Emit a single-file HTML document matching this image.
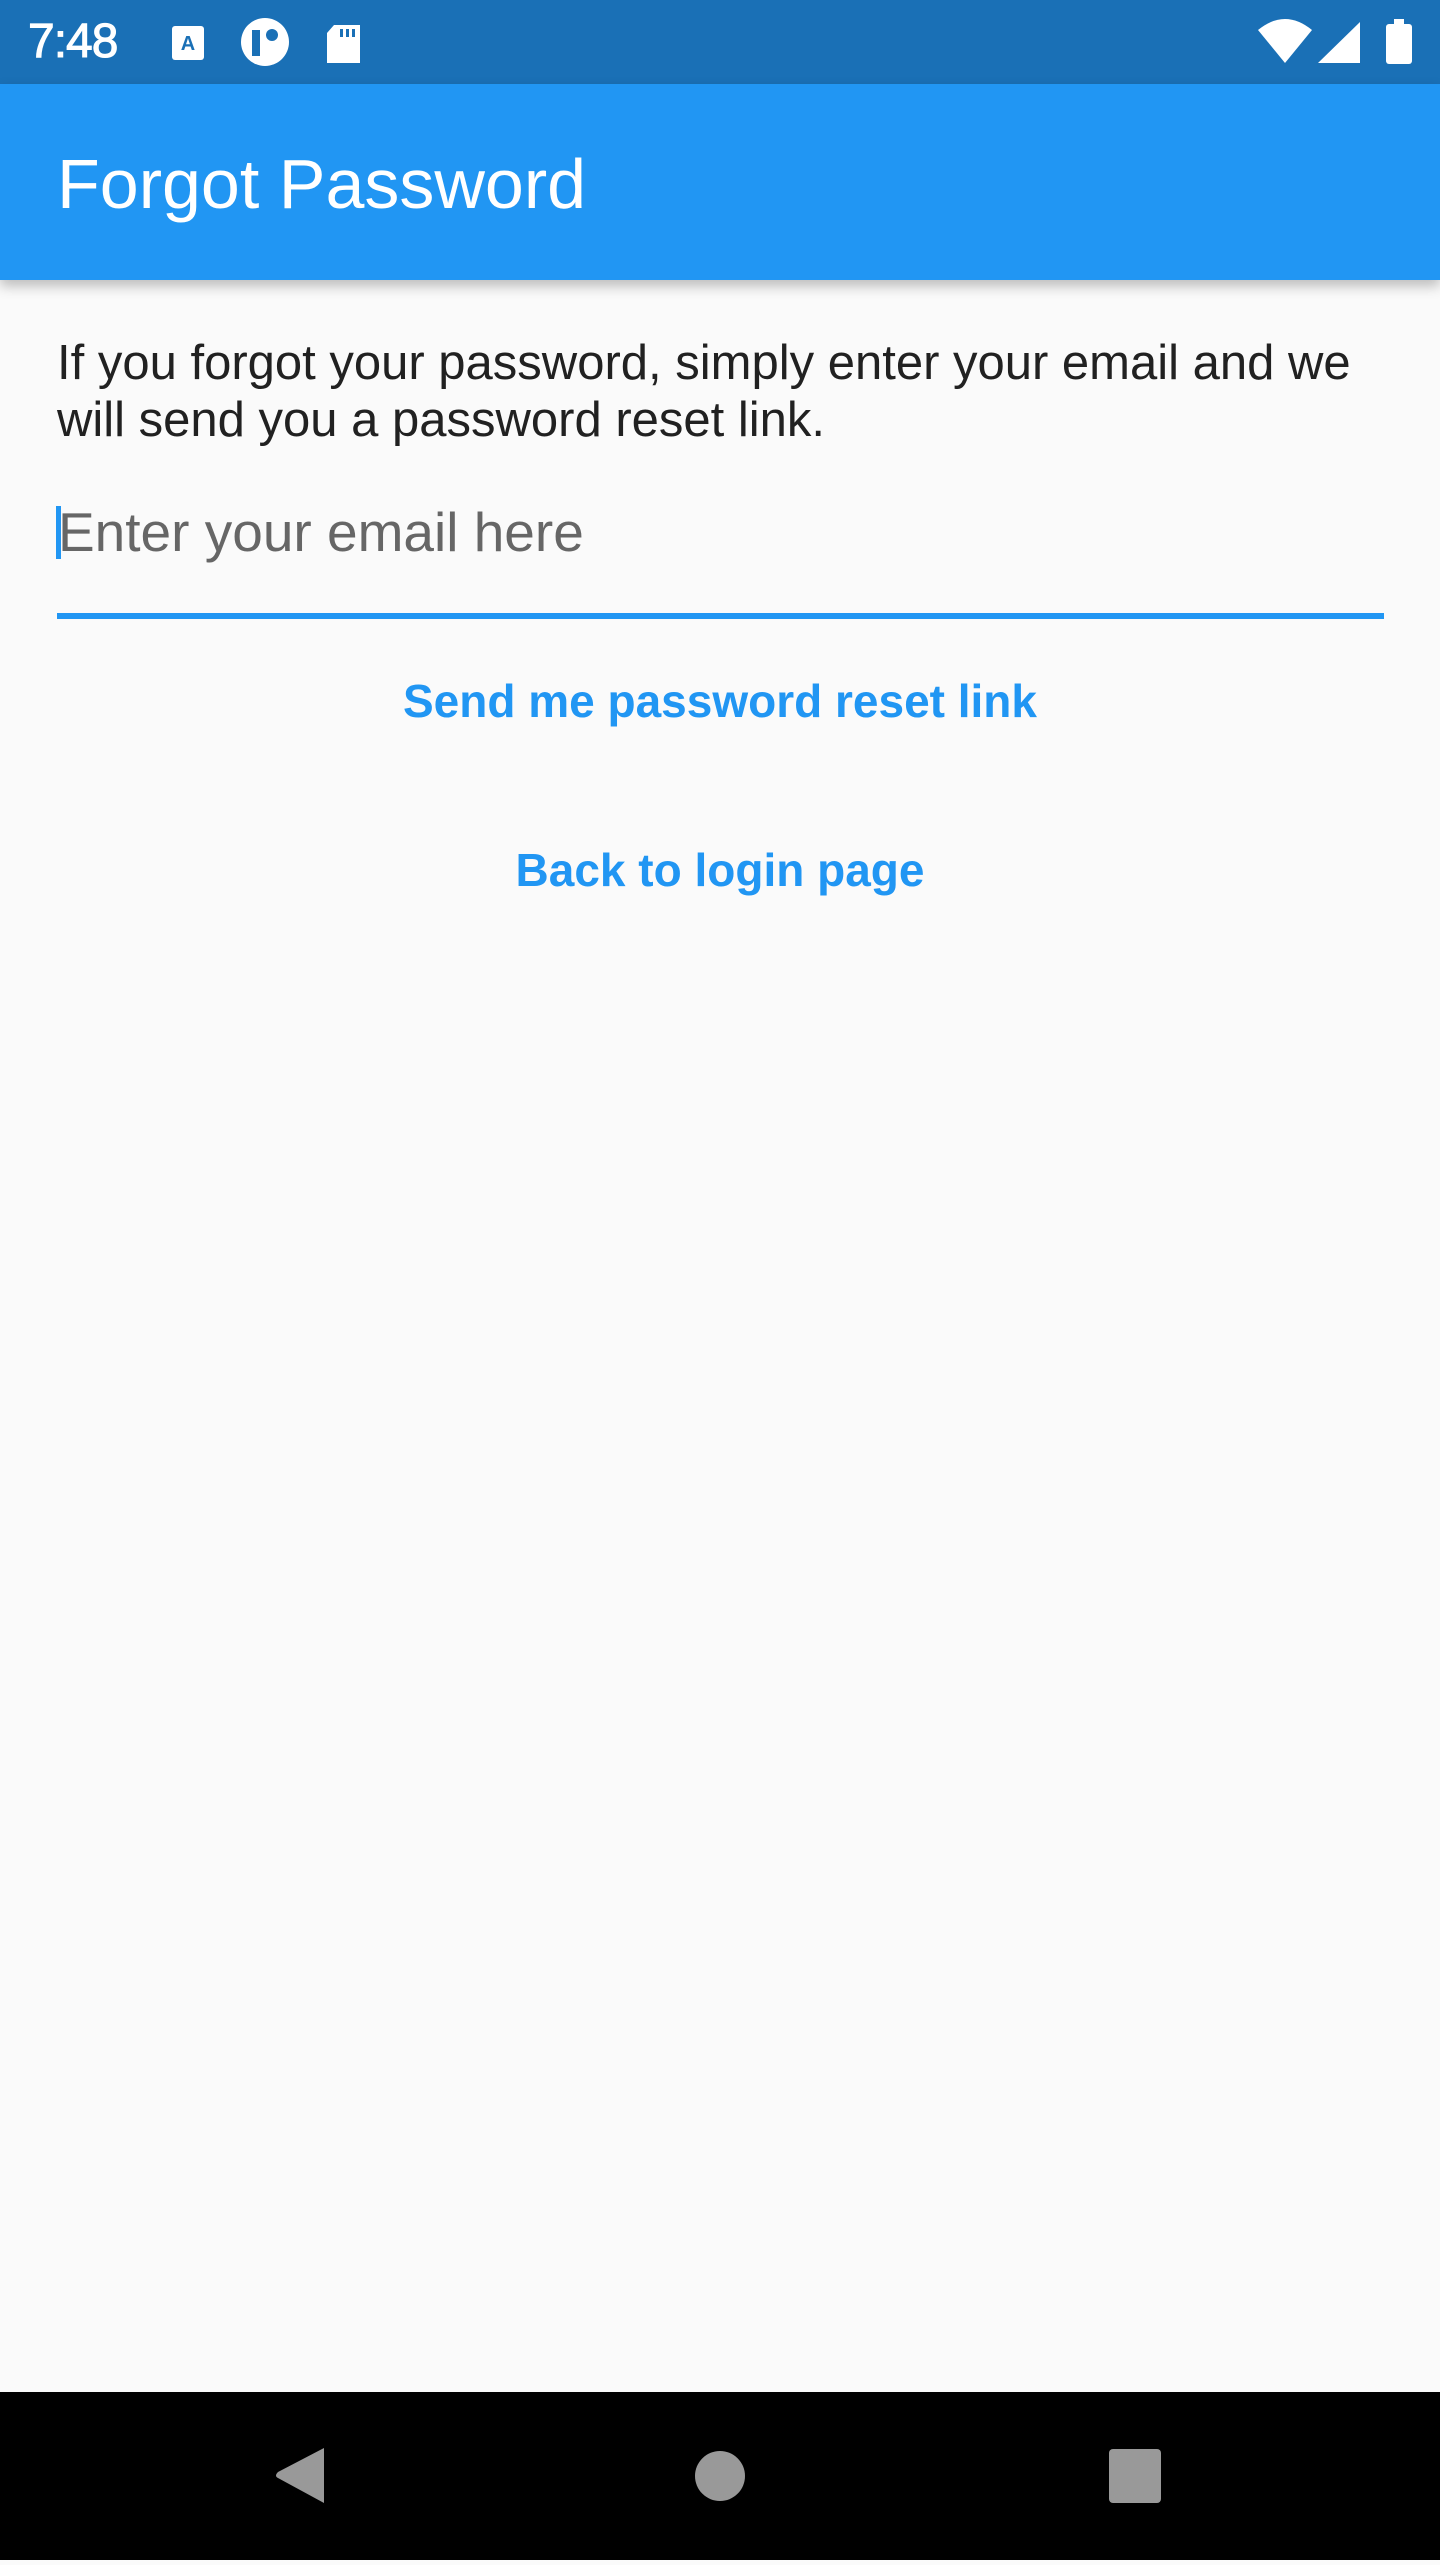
<!DOCTYPE html>
<html><head><meta charset="utf-8"><style>
*{margin:0;padding:0;box-sizing:border-box}
body{width:1440px;height:2560px;background:#fafafa;font-family:"Liberation Sans",sans-serif;position:relative;overflow:hidden}
.sb{position:absolute;left:0;top:0;width:1440px;height:84px;background:#1a70b6}
.ab{position:absolute;left:0;top:84px;width:1440px;height:196px;background:#2196f3;box-shadow:0 6px 12px rgba(0,0,0,.25)}
.t{position:absolute;white-space:nowrap}
.nav{position:absolute;left:0;top:2392px;width:1440px;height:168px;background:#000}
</style></head><body>
<div class="sb">
<div class="t" style="left:28px;top:14px;font-size:48px;color:#fff;letter-spacing:-1px;-webkit-text-stroke:1px #fff">7:48</div>
<svg style="position:absolute;left:0;top:0" width="1440" height="84">
<rect x="172" y="26" width="32" height="34" rx="3" fill="#fff"/>
<text x="188" y="50" font-size="20" font-weight="bold" fill="#1a70b6" text-anchor="middle" font-family="Liberation Sans">A</text>
<circle cx="265" cy="42" r="24" fill="#fff"/>
<rect x="252" y="30" width="8" height="26" fill="#1a70b6"/>
<circle cx="272" cy="35" r="6" fill="#1a70b6"/>
<path d="M334 25h26v38h-33v-30z" fill="#fff"/>
<rect x="340" y="29" width="3" height="8" fill="#1a70b6"/><rect x="346" y="29" width="3" height="8" fill="#1a70b6"/><rect x="352" y="29" width="3" height="8" fill="#1a70b6"/>
<path d="M1258 30 Q1285 8 1312 30 L1285 63 Z" fill="#fff"/>
<path d="M1360 22 L1360 63 L1318 63 Z" fill="#fff"/>
<rect x="1386" y="24" width="26" height="40" rx="3" fill="#fff"/><rect x="1394" y="19" width="10" height="6" fill="#fff"/>
</svg>
</div>
<div class="ab"><div class="t" style="left:57px;top:60px;font-size:70px;color:#fff">Forgot Password</div></div>
<div class="t" style="left:57px;top:335px;font-size:49px;line-height:57px;color:#212121">If you forgot your password, simply enter your email and we<br>will send you a password reset link.</div>
<div style="position:absolute;left:56px;top:506px;width:5px;height:53px;background:#2196f3"></div>
<div class="t" style="left:58px;top:500px;font-size:55px;color:#666">Enter your email here</div>
<div style="position:absolute;left:57px;top:613px;width:1327px;height:6px;background:#2196f3"></div>
<div class="t" style="left:0;width:1440px;text-align:center;top:674px;font-size:46px;font-weight:bold;color:#2196f3">Send me password reset link</div>
<div class="t" style="left:0;width:1440px;text-align:center;top:843px;font-size:46px;font-weight:bold;color:#2196f3">Back to login page</div>
<div class="nav"><svg width="1440" height="168">
<path d="M324 56 L324 111 L278 86 Q274 84 278 80 Z" fill="#999"/>
<circle cx="720" cy="84" r="25" fill="#999"/>
<rect x="1109" y="57" width="52" height="54" rx="4" fill="#999"/>
</svg></div>
</body></html>
